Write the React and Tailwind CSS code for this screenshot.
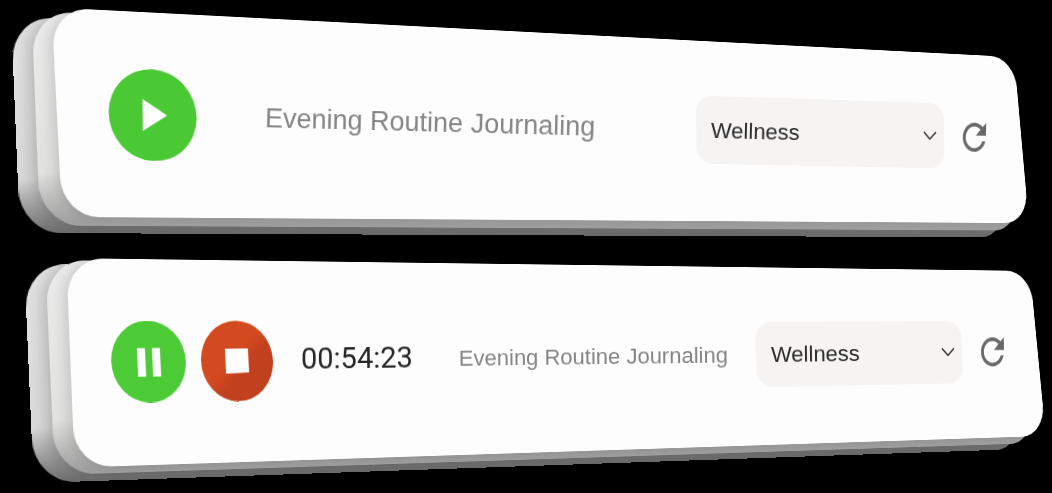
import { useLayoutEffect, useRef, useState } from 'react'

// corners: percent of the parent box, clockwise from top left
const CARDS = {
  idle: {
    back: [[1.05, 6.5], [95, 28.5], [95.6, 96.5], [1.9, 94.7]],
    middle: [[3, 4.3], [95.7, 26], [96.9, 93.7], [3.8, 91.7]],
    front: [[4.9, 3], [96.4, 23.2], [97.8, 90.7], [5.9, 88.2]],
  },
  running: {
    back: [[2.3, 7.2], [96, 13.8], [97.1, 82.2], [3.2, 96]],
    middle: [[4.3, 5.6], [97, 11.7], [98.4, 79.8], [5.2, 92.7]],
    front: [[6.3, 4.9], [97.9, 10.1], [99.4, 76.9], [7.1, 89.7]],
  },
}

const FIELD = [[0, 0], [100, 2], [101, 98], [1, 100]]

// projective map from a w x h box onto four corners
function project(corners, w, h) {
  const [[x0, y0], [x1, y1], [x2, y2], [x3, y3]] = corners.map(([x, y]) => [(x * w) / 100, (y * h) / 100])
  const dx1 = x1 - x2
  const dx2 = x3 - x2
  const dy1 = y1 - y2
  const dy2 = y3 - y2
  const sx = x0 - x1 + x2 - x3
  const sy = y0 - y1 + y2 - y3
  const den = dx1 * dy2 - dx2 * dy1
  const g = (sx * dy2 - dx2 * sy) / den
  const k = (dx1 * sy - sx * dy1) / den
  const m = [
    (x1 - x0 + g * x1) / w, (y1 - y0 + g * y1) / w, 0, g / w,
    (x3 - x0 + k * x3) / h, (y3 - y0 + k * y3) / h, 0, k / h,
    0, 0, 1, 0,
    x0, y0, 0, 1,
  ]
  return `matrix3d(${m.map((n) => n.toFixed(10)).join(',')})`
}

// empty surface, drawn in perspective behind the flat content
function Slab({ corners, className }) {
  const ref = useRef(null)
  const [transform, setTransform] = useState('none')

  useLayoutEffect(() => {
    const el = ref.current
    const update = () => setTransform(project(corners, el.offsetWidth, el.offsetHeight))
    update()
    const observer = new ResizeObserver(update)
    observer.observe(el)
    return () => observer.disconnect()
  }, [corners])

  return <div ref={ref} aria-hidden="true" className={`absolute inset-0 origin-top-left ${className}`} style={{ transform }} />
}

function Stack({ corners }) {
  return (
    <>
      <Slab
        corners={corners.back}
        className="rounded-[34px/50px] bg-linear-to-b from-[#e4e4e4] from-0% via-[#dadada] via-75% to-[#6c6c6c] to-100%"
      />
      <Slab
        corners={corners.middle}
        className="rounded-[34px/50px] bg-linear-to-b from-[#ececec] from-0% via-[#e2e2e0] via-75% to-[#a0a0a0] to-98% shadow-[-2px_0_16px_rgba(0,0,0,0.25)]"
      />
      <Slab corners={corners.front} className="rounded-[32px/46px] bg-[#fdfdfd] shadow-[-2px_0_14px_rgba(0,0,0,0.18)]" />
    </>
  )
}

function PlayButton() {
  return (
    <button type="button" aria-label="Play" className="shrink-0">
      <svg viewBox="0 0 89 92" className="h-[92px] w-[89px]">
        <ellipse cx="0" cy="0" rx="44" ry="45.8" transform="matrix(1 0.04 0.03 1 44.5 46)" fill="#4bc935" />
        <path d="M34 30l1 32 24-16z" fill="#fff" />
      </svg>
    </button>
  )
}

function PauseButton() {
  return (
    <button type="button" aria-label="Pause" className="shrink-0">
      <svg viewBox="0 0 75 82" className="h-[82px] w-[75px]">
        <ellipse cx="0" cy="0" rx="37.3" ry="41" transform="matrix(1 0.02 0.02 1 37.5 41)" fill="#4ccb37" />
        <path d="M26 27.500h8l1 28.500h-8zM41 27.500h8l1 28.500h-8z" fill="#fff" />
      </svg>
    </button>
  )
}

function StopButton() {
  return (
    <button type="button" aria-label="Stop" className="shrink-0">
      <svg viewBox="0 0 72 81" className="h-[81px] w-[72px]">
        <defs>
          <linearGradient id="stop-fill" x1="0" y1="0" x2="1" y2="1">
            <stop offset="0.45" stopColor="#d34a21" />
            <stop offset="0.6" stopColor="#c1401d" />
          </linearGradient>
        </defs>
        <ellipse cx="0" cy="0" rx="36" ry="40.3" transform="matrix(1 0.02 0.02 1 36 40.5)" fill="url(#stop-fill)" />
        <path d="M24 28h23l1 24-23 1z" fill="#fff" />
      </svg>
    </button>
  )
}

function CategorySelect({ className }) {
  return (
    <div className={`relative shrink-0 ${className}`}>
      <Slab corners={FIELD} className="rounded-2xl bg-[#f5f4f3]" />
      <select
        aria-label="Category"
        defaultValue="Wellness"
        className="relative h-full w-full appearance-none bg-transparent pr-8 pl-4 text-[22px] text-[#2b2b2b]"
      >
        <option>Wellness</option>
      </select>
      <svg viewBox="0 0 14 9" className="pointer-events-none absolute top-1/2 right-1.5 h-[9px] w-[14px] -translate-y-1/2" fill="none" stroke="#222" strokeWidth="1.2">
        <path d="M1 1l6 7 6-7" />
      </svg>
    </div>
  )
}

function RefreshButton() {
  return (
    <button type="button" aria-label="Refresh" className="shrink-0">
      <svg viewBox="4 4 16 16" preserveAspectRatio="none" className="h-[29px] w-[23px]" fill="#686868">
        <path d="M17.65 6.35C16.2 4.9 14.21 4 12 4c-4.42 0-7.99 3.58-7.99 8s3.57 8 7.99 8c3.73 0 6.84-2.55 7.73-6h-2.08c-.82 2.33-3.04 4-5.65 4-3.31 0-6-2.69-6-6s2.69-6 6-6c1.66 0 3.14.69 4.22 1.78L13 11h7V4l-2.35 2.35z" />
      </svg>
    </button>
  )
}

export default function App() {
  return (
    <main className="min-h-screen overflow-hidden bg-black font-['Liberation_Sans',Arial,sans-serif]">
      <section className="relative pt-[79px] pb-[75px]">
        <Stack corners={CARDS.idle} />
        <div className="relative flex rotate-[1.5deg] items-center pr-[66px] pl-[108px]">
          <PlayButton />
          <p className="ml-[68px] text-[27px] whitespace-nowrap text-[#858585]">Evening Routine Journaling</p>
          <div className="ml-auto flex items-center gap-5">
            <CategorySelect className="h-[68px] w-[248px]" />
            <RefreshButton />
          </div>
        </div>
      </section>

      <section className="relative pt-[70px] pb-[95px]">
        <Stack corners={CARDS.running} />
        <div className="relative flex rotate-[-0.7deg] items-center pr-[48px] pl-[111px]">
          <div className="flex items-center gap-[15px]">
            <PauseButton />
            <StopButton />
          </div>
          <time className="ml-7 font-['Roboto',sans-serif] text-[29px] text-[#262626]">00:54:23</time>
          <p className="ml-[46px] text-[22px] whitespace-nowrap text-[#858585]">Evening Routine Journaling</p>
          <div className="ml-auto flex items-center gap-5">
            <CategorySelect className="h-[65px] w-[206px]" />
            <RefreshButton />
          </div>
        </div>
      </section>
    </main>
  )
}
